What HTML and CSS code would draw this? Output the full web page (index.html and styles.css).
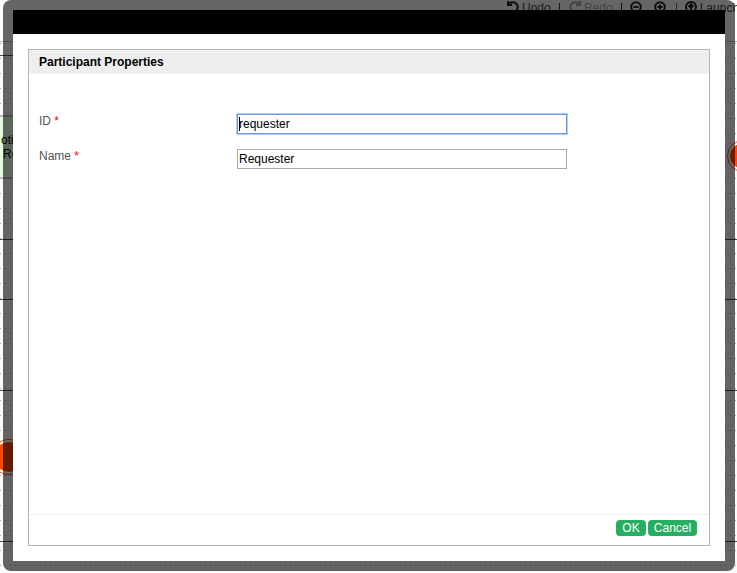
FILE: index.html
```html
<!DOCTYPE html>
<html lang="en">
<head>
<meta charset="utf-8">
<title>Participant Properties</title>
<link rel="stylesheet" href="styles.css">
</head>
<body>
<svg class="canvas" width="737" height="573" viewBox="0 0 737 573">
  <defs>
    <pattern id="grid" x="10" y="28" width="15" height="15" patternUnits="userSpaceOnUse">
      <path fill="#a9a9a9" d="M0 0h1v1H0zM5 0h1v1H5zM10 0h1v1H10z"/>
      <path fill="#cecece" d="M0 5h1v1H0zM0 10h1v1H0z"/>
    </pattern>
    <pattern id="grid-low" x="10" y="40" width="15" height="15" patternUnits="userSpaceOnUse">
      <path fill="#a9a9a9" d="M0 0h1v1H0zM5 0h1v1H5zM10 0h1v1H10z"/>
      <path fill="#cecece" d="M0 5h1v1H0zM0 10h1v1H0z"/>
    </pattern>
  </defs>
  <path fill="#fafafa" d="M0 41h737v532H0z"/>
  <path fill="url(#grid)" d="M0 42h737v349H0z"/>
  <path fill="url(#grid-low)" d="M0 391h737v182H0z"/>
  <path fill="#bbb" d="M0 41h737v1H0z"/>
  <path fill="#505050" d="M0 55h13v1H0zM0 239h737v1H0zM0 299h737v1H0zM0 390h737v1H0zM0 541h737v1H0z"/>
  <rect x="-50" y="116" width="90" height="62" fill="#dfffdf" stroke="#bbb" stroke-width="2"/>
  <g class="task-label"><text x="1" y="144">otify</text><text x="3" y="158">Requester</text></g>
  <g fill="#fff" stroke="#ff4500">
    <circle cx="743" cy="156" r="15.5"/><circle cx="743" cy="156" r="12.5" fill="#ff4500"/>
    <circle cx="9" cy="457" r="17.5"/><circle cx="9" cy="457" r="15" fill="#ff4500" stroke="none"/>
  </g>
</svg>

<nav class="toolbar">
  <svg viewBox="0 0 14 14"><path d="M2 1v4h4M2.5 4.5A5 5 0 1 1 3.5 11"/></svg><span class="label undo">Undo</span><i class="purple"></i>
  <svg class="dim redo" viewBox="0 0 14 14"><path d="M12 1v4H8M11.5 4.5A5 5 0 1 0 10.5 11"/></svg><span class="label dim">Redo</span><i class="second"></i>
  <svg class="out" viewBox="0 0 14 14"><circle cx="7" cy="7" r="4.8"/><path d="M4.5 7h5"/></svg>
  <svg class="in" viewBox="0 0 14 14"><circle cx="7" cy="7" r="4.8"/><path d="M4.5 7h5M7 4.5v5"/></svg><i class="brown"></i>
  <svg class="up" viewBox="0 0 14 14"><circle cx="7" cy="7" r="5"/><path d="M7 10.5V4.5M4.5 7L7 4.5 9.5 7"/></svg><span class="label">Launch</span>
</nav>

<div class="frame">
  <main class="dialog">
    <div class="titlebar"></div>
    <section class="panel">
      <h1>Participant Properties</h1>
      <form class="fields">
        <div class="row">
          <label for="pid">ID <b>*</b></label>
          <div class="control active"><input id="pid" value="requester"><span class="caret"></span></div>
        </div>
        <div class="row">
          <label for="name">Name <b>*</b></label>
          <div class="control"><input id="name" value="Requester"></div>
        </div>
      </form>
      <footer><button class="ok" type="button">OK</button><button class="cancel" type="button">Cancel</button></footer>
    </section>
  </main>
</div>
</body>
</html>
```
FILE: styles.css
```css
* { box-sizing: border-box; }
body {
  position: relative;
  width: 737px;
  height: 573px;
  margin: 0;
  overflow: hidden;
  background: #fff;
  font: 12px/14px "Liberation Sans", Arial, sans-serif;
}
.canvas { position: absolute; left: 0; top: 0; }
.task-label { font-size: 12px; fill: #000; }
.toolbar {
  position: absolute;
  left: 506px;
  top: 0;
  display: flex;
  align-items: center;
  height: 14px;
  white-space: nowrap;
  color: #444;
}
.toolbar svg {
  flex: none;
  width: 14px;
  height: 14px;
  fill: none;
  stroke: #222;
  stroke-width: 2;
}
.toolbar .dim { color: #aaa; stroke: #aaa; }
.label { margin-left: 2px; padding-top: 2px; }
.undo { width: 29px; }
.toolbar i { width: 1px; height: 10px; margin: 2px 0 0 8px; background: #222; }
.toolbar .purple { background: #808; }
.toolbar .brown { background: #a60; margin-left: 9px; }
.redo { margin-left: 8px; }
.out { margin-left: 7px; }
.in { margin-left: 10px; }
.up { margin-left: 7px; }
.frame {
  position: absolute;
  left: 3px;
  top: 0;
  width: 732px;
  height: 571px;
  padding: 10px;
  border-radius: 8px;
  background: rgba(0, 0, 0, .6);
}
.dialog { display: flex; flex-direction: column; height: 551px; background: #fff; }
.titlebar { flex: none; height: 24px; background: #000; }
.panel {
  display: flex;
  flex-direction: column;
  width: 682px;
  height: 497px;
  margin: 15px 0 0 15px;
  border: 1px solid #b5b5b5;
}
h1 {
  height: 24px;
  margin: 0;
  padding: 5px 10px;
  background: #eee;
  color: #000;
  font-size: 12px;
  line-height: 14px;
}
.fields { flex: 1; padding: 40px 10px 0; }
.row { display: flex; height: 35px; }
label { width: 198px; color: #555; }
label b { color: #f00; font-weight: normal; }
.control {
  position: relative;
  width: 330px;
  height: 20px;
  border: 1px solid #a9a9a9;
}
.control.active { border-color: #6f94d9; box-shadow: 0 0 0 1px #b0cffa; }
.control input {
  display: block;
  width: 100%;
  height: 18px;
  padding: 1px;
  border: 0;
  outline: 0;
  background: #fff;
  color: #000;
  font: 12px/16px "Liberation Sans", Arial, sans-serif;
}
.caret { position: absolute; left: 1px; top: 2px; width: 1px; height: 14px; background: #000; }
footer {
  display: flex;
  gap: 2px;
  justify-content: flex-end;
  height: 31px;
  padding: 5px 12px 0 0;
  border-top: 1px solid #eee;
}
button {
  height: 16px;
  padding: 0;
  border: 0;
  border-radius: 4px;
  background: #27ae60;
  color: #fff;
  font: 12px/16px "Liberation Sans", Arial, sans-serif;
}
.ok { width: 30px; }
.cancel { width: 49px; }
```
